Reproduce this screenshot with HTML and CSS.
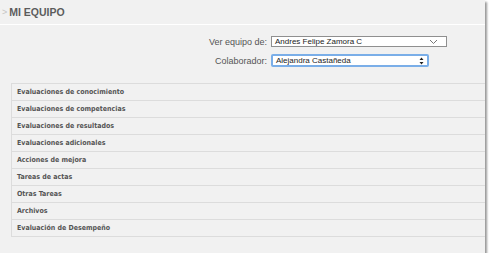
FILE: index.html
```html
<!DOCTYPE html>
<html lang="es">
<head>
    <meta charset="UTF-8">
    <title>Mi equipo</title>
    <link rel="stylesheet" href="styles.css">
</head>
<body>
    <div class="panel">
        <div class="head">
            <span class="caret">&gt;</span>
            <span class="title">MI EQUIPO</span>
        </div>

        <div class="form">
            <label class="lbl">Ver equipo de:</label>
            <div class="sel sel-team">
                <span>Andres Felipe Zamora C</span>
                <svg class="chev" width="9" height="6" viewBox="0 0 9 6">
                    <path d="M1 1 L4.5 4.5 L8 1" fill="none" stroke="#777" stroke-width="1"/>
                </svg>
            </div>

            <label class="lbl">Colaborador:</label>
            <div class="sel sel-colab">
                <span>Alejandra Castañeda</span>
                <svg class="updown" width="5" height="8" viewBox="0 0 5 8">
                    <path d="M0.5 3 L2.5 0.5 L4.5 3 Z M0.5 5 L2.5 7.5 L4.5 5 Z" fill="#222"/>
                </svg>
            </div>
        </div>

        <ul class="list">
            <li>Evaluaciones de conocimiento</li>
            <li>Evaluaciones de competencias</li>
            <li>Evaluaciones de resultados</li>
            <li>Evaluaciones adicionales</li>
            <li>Acciones de mejora</li>
            <li>Tareas de actas</li>
            <li>Otras Tareas</li>
            <li>Archivos</li>
            <li>Evaluación de Desempeño</li>
        </ul>
    </div>
</body>
</html>
```

FILE: styles.css
```css
body {
    margin: 0;
    background: #fff;
    font-family: 'Liberation Sans', Arial, sans-serif;
}

.panel {
    width: 485px;
    height: 253px;
    background: #f1f1f1;
    box-shadow: 2px 2px 2px #9a9a9a;
    box-sizing: border-box;
}

.head {
    height: 25px;
    border-bottom: 1px solid #fff;
    display: flex;
    align-items: center;
    padding-left: 2px;
    box-sizing: border-box;
}

.caret {
    color: #c4c4c4;
    font-size: 9px;
    margin-right: 2px;
}

.title {
    color: #5c5c5c;
    font-size: 10.5px;
    font-weight: bold;
}

.form {
    display: grid;
    grid-template-columns: 267px auto;
    column-gap: 4px;
    row-gap: 7px;
    align-items: center;
    padding-top: 11px;
}

.lbl {
    text-align: right;
    color: #555;
    font-size: 9px;
}

.sel {
    display: flex;
    align-items: center;
    justify-content: space-between;
    background: #fff;
    color: #222;
    font-size: 8px;
    box-sizing: border-box;
}

.sel-team {
    width: 176px;
    height: 11px;
    border: 1px solid #8f8f8f;
    padding: 0 8px 0 3px;
}

.sel-colab {
    width: 158px;
    height: 13px;
    border: 2px solid #7aaee8;
    border-radius: 2px;
    padding: 0 3px 0 3px;
}

.list {
    list-style: none;
    margin: 16px 0 0 11px;
    padding: 0;
    border: 1px solid #dcdcdc;
    border-right: 0;
    border-bottom: 0;
}

.list li {
    height: 16px;
    line-height: 16px;
    border-bottom: 1px solid #dcdcdc;
    padding-left: 5px;
    font-family: 'DejaVu Sans Condensed', 'DejaVu Sans', Verdana, sans-serif;
    font-size: 7px;
    font-weight: bold;
    color: #555;
}
```
